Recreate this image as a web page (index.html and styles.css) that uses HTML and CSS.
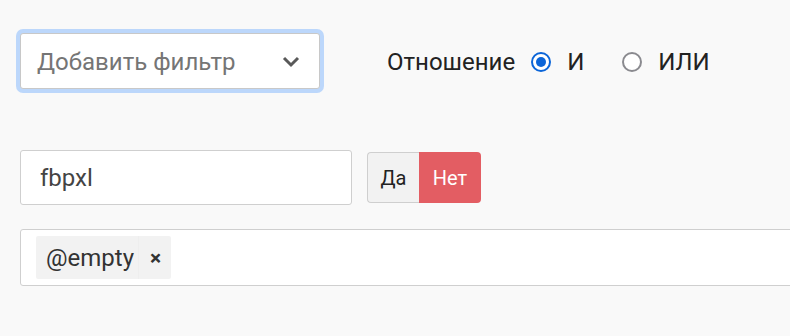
FILE: index.html
```html
<!DOCTYPE html>
<html lang="ru">
<head>
<meta charset="utf-8">
<link rel="stylesheet" href="styles.css">
</head>
<body>
<div class="page">
  <div class="row-top">
    <div class="select">
      <span class="select-text">Добавить фильтр</span>
      <svg class="chevron" width="18" height="12" viewBox="0 0 18 12"><path d="M2 2 L9 9 L16 2" fill="none" stroke="#595959" stroke-width="3"/></svg>
    </div>
    <div class="relation">
      <span class="rel-label">Отношение</span>
      <label class="opt"><span class="radio checked"></span><span>И</span></label>
      <label class="opt"><span class="radio"></span><span>ИЛИ</span></label>
    </div>
  </div>
  <div class="row-mid">
    <div class="text-input">fbpxl</div>
    <div class="toggle">
      <span class="btn yes">Да</span>
      <span class="btn no">Нет</span>
    </div>
  </div>
  <div class="tags">
    <span class="tag"><span class="tag-text">@empty</span><span class="tag-x">×</span></span>
  </div>
</div>
</body>
</html>
```

FILE: styles.css
```css
html, body {
  margin: 0;
  padding: 0;
  background: #f9f9f9;
  overflow: hidden;
}
.page {
  width: 790px;
  height: 336px;
  padding: 33px 0 0 20px;
  box-sizing: border-box;
  font-family: Roboto, "Noto Sans", sans-serif;
  color: #222;
}
.row-top {
  display: flex;
  align-items: center;
}
.select {
  width: 300px;
  height: 56px;
  box-sizing: border-box;
  background: #fff;
  border: 1px solid #c8c8c8;
  border-radius: 3px;
  box-shadow: 0 0 0 4px #bcd7fb;
  display: flex;
  align-items: center;
  justify-content: space-between;
  padding: 2px 19px 0 16px;
}
.select-text {
  font-size: 24px;
  color: #757575;
}
.chevron {
  display: block;
}
.relation {
  display: flex;
  align-items: center;
  margin-left: 67px;
  padding-top: 2px;
  font-size: 24px;
  color: #222;
}
.rel-label {
  margin-right: 16px;
}
.opt {
  display: flex;
  align-items: center;
  margin-right: 38px;
}
.radio {
  width: 20px;
  height: 20px;
  box-sizing: border-box;
  border-radius: 50%;
  border: 2px solid #8a8a8f;
  background: #fff;
  margin-right: 16px;
  position: relative;
}
.radio.checked {
  border-color: #0b65d8;
}
.radio.checked::after {
  content: "";
  position: absolute;
  left: 3px;
  top: 3px;
  width: 10px;
  height: 10px;
  border-radius: 50%;
  background: #0b65d8;
}
.row-mid {
  display: flex;
  align-items: center;
  margin-top: 61px;
}
.text-input {
  width: 332px;
  height: 55px;
  box-sizing: border-box;
  background: #fff;
  border: 1px solid #cfcfcf;
  border-radius: 3px;
  display: flex;
  align-items: center;
  padding-left: 19px;
  font-size: 24px;
  color: #444;
}
.toggle {
  display: flex;
  margin-left: 15px;
  height: 51px;
}
.btn {
  display: flex;
  align-items: center;
  justify-content: center;
  font-size: 20px;
  box-sizing: border-box;
}
.btn.yes {
  width: 52px;
  background: #f2f2f2;
  border: 1px solid #cfcfcf;
  border-right: none;
  border-radius: 4px 0 0 4px;
  color: #222;
}
.btn.no {
  width: 62px;
  background: #e35d63;
  color: #fff;
  border-radius: 0 4px 4px 0;
}
.tags {
  margin-top: 24px;
  width: 800px;
  height: 57px;
  box-sizing: border-box;
  background: #fff;
  border: 1px solid #cfcfcf;
  border-radius: 3px;
  display: flex;
  align-items: center;
  padding-left: 15px;
}
.tag {
  display: flex;
  align-items: center;
  height: 43px;
  background: #f2f2f2;
  border-radius: 2px;
  font-size: 24px;
  color: #333;
}
.tag-text {
  padding: 0 4px 0 10px;
  height: 100%;
  display: flex;
  align-items: center;
  border-right: 1px solid #eeeeee;
}
.tag-x {
  padding: 0 10px 0 11px;
  font-size: 21px;
  font-weight: bold;
  color: #333;
}
```
